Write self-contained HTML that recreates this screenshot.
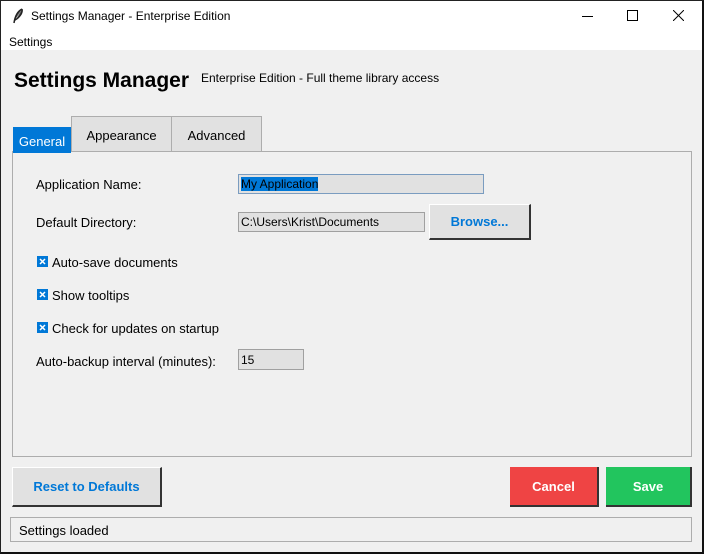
<!DOCTYPE html><html><head><style>
*{margin:0;padding:0;box-sizing:border-box}
body{width:704px;height:554px;position:relative;background:#f0f0f0;font-family:"Liberation Sans",sans-serif;font-size:13px;color:#000;overflow:hidden}
.a{position:absolute}
.win{position:absolute;left:0;top:0;width:704px;height:554px;border:1px solid #222;border-right:2px solid #111;border-bottom:2px solid #111;pointer-events:none}
.ent{position:absolute;background:#e1e1e1;border:1px solid #a0a0a0;font-size:12px;padding:2px 2px}
.btn{position:absolute;display:flex;align-items:center;justify-content:center;font-weight:bold;font-size:13px}
.cb{position:absolute;left:37px;width:11px;height:11px;background:#fff;border:1px solid #0078d7}
.cbt{position:absolute;left:52px}
</style></head><body>
<div class="a" style="left:0;top:0;width:704px;height:50px;background:#fff"></div>
<svg class="a" style="left:12px;top:8px" width="12" height="16" viewBox="0 0 12 16"><path d="M10 1 C6 3 3 8 2 15 M10 1 C11 5 7 10 3 12" stroke="#222" stroke-width="1.5" fill="#555"/></svg>
<div class="a" style="left:31px;top:9px;font-size:12px">Settings Manager - Enterprise Edition</div>
<div class="a" style="left:582px;top:16px;width:11px;height:1px;background:#000"></div>
<div class="a" style="left:627px;top:10px;width:11px;height:11px;border:1px solid #000"></div>
<svg class="a" style="left:673px;top:10px" width="11" height="11"><path d="M0 0L11 11M11 0L0 11" stroke="#000" stroke-width="1"/></svg>
<div class="a" style="left:9px;top:35px;font-size:12px">Settings</div>
<div class="a" style="left:14px;top:69px;font-size:21px;font-weight:bold">Settings Manager</div>
<div class="a" style="left:201px;top:71px;font-size:12px">Enterprise Edition - Full theme library access</div>
<div class="a" style="left:12px;top:151px;width:680px;height:306px;border:1px solid #adadad;background:#f0f0f0"></div>
<div class="a" style="left:71px;top:116px;width:101px;height:36px;border:1px solid #adadad;background:#e1e1e1;text-align:center;padding-top:11px">Appearance</div>
<div class="a" style="left:171px;top:116px;width:91px;height:36px;border:1px solid #adadad;background:#e1e1e1;text-align:center;padding-top:11px">Advanced</div>
<div class="a" style="left:13px;top:127px;width:58px;height:26px;background:#0078d7;color:#fff;text-align:center;padding-top:7px">General</div>
<div class="a" style="left:36px;top:177px">Application Name:</div>
<div class="ent" style="left:238px;top:174px;width:246px;height:20px;border-color:#7a9cc0"><span style="background:#0078d7;color:#000">My Application</span></div>
<div class="a" style="left:36px;top:215px">Default Directory:</div>
<div class="ent" style="left:238px;top:212px;width:187px;height:20px">C:\Users\Krist\Documents</div>
<div class="btn" style="left:429px;top:204px;width:102px;height:36px;background:#e1e1e1;border:1px solid #fff;border-right:2px solid #333;border-bottom:2px solid #333;color:#0078d7">Browse...</div>
<svg class="a" style="left:37px;top:256px" width="11" height="11"><rect x="0.5" y="0.5" width="10" height="10" fill="#0078d7" stroke="#0078d7"/><path d="M3 3L8 8M8 3L3 8" stroke="#fff" stroke-width="1.5"/></svg><div class="cbt" style="top:255px">Auto-save documents</div>
<svg class="a" style="left:37px;top:289px" width="11" height="11"><rect x="0.5" y="0.5" width="10" height="10" fill="#0078d7" stroke="#0078d7"/><path d="M3 3L8 8M8 3L3 8" stroke="#fff" stroke-width="1.5"/></svg><div class="cbt" style="top:288px">Show tooltips</div>
<svg class="a" style="left:37px;top:322px" width="11" height="11"><rect x="0.5" y="0.5" width="10" height="10" fill="#0078d7" stroke="#0078d7"/><path d="M3 3L8 8M8 3L3 8" stroke="#fff" stroke-width="1.5"/></svg><div class="cbt" style="top:321px">Check for updates on startup</div>
<div class="a" style="left:36px;top:354px">Auto-backup interval (minutes):</div>
<div class="ent" style="left:238px;top:349px;width:66px;height:21px;padding-top:3px">15</div>
<div class="btn" style="left:12px;top:467px;width:150px;height:40px;background:#e1e1e1;border:1px solid #fff;border-right:2px solid #333;border-bottom:2px solid #333;color:#0078d7">Reset to Defaults</div>
<div class="btn" style="left:510px;top:467px;width:89px;height:40px;background:#ef4444;border-right:2px solid #333;border-bottom:2px solid #333;color:#fff">Cancel</div>
<div class="btn" style="left:606px;top:467px;width:86px;height:40px;background:#22c55e;border-right:2px solid #333;border-bottom:2px solid #333;color:#fff">Save</div>
<div class="a" style="left:10px;top:517px;width:682px;height:25px;border:1px solid #adadad;padding:5px 0 0 8px">Settings loaded</div>
<div class="win"></div>
</body></html>
